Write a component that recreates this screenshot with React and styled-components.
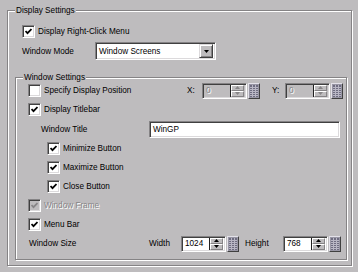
import styled, { createGlobalStyle } from 'styled-components';

const GlobalStyle = createGlobalStyle`
  html, body {
    margin: 0;
    padding: 0;
    background: #bebcbe;
  }
  body {
    font-family: "Liberation Sans", Arial, sans-serif;
    font-size: 8.2px;
    color: #000;
  }
`

const Page = styled.div`
  width: 358px;
  height: 272px;
  padding-top: 10px;
  box-sizing: border-box;
  overflow: hidden;
`

const Group = styled.div`
  position: relative;
  box-sizing: border-box;
  width: ${p => p.$w}px;
  height: ${p => p.$h}px;
  margin-left: ${p => p.$left || 0}px;
  margin-top: ${p => p.$top || 0}px;
  padding: ${p => p.$pad};
  border: 1px solid #858385;
  box-shadow: 1px 1px 0 #fff, inset 1px 1px 0 #fff;
`

const Legend = styled.span`
  position: absolute;
  top: -6px;
  left: 7px;
  padding: 0 1px;
  line-height: 11px;
  background: #bebcbe;
`

const Row = styled.div`
  display: flex;
  align-items: center;
  height: ${p => p.$h || 19}px;
  padding-left: ${p => p.$indent || 0}px;
`

const Label = styled.span`
  display: inline-block;
  width: ${p => (p.$w ? `${p.$w}px` : 'auto')};
  margin-left: ${p => p.$ml || 0}px;
  white-space: nowrap;
  color: ${p => (p.$disabled ? '#878587' : '#000')};
  text-shadow: ${p => (p.$disabled ? '1px 1px 0 #fff' : 'none')};
`

const CheckWrap = styled.label`
  display: flex;
  align-items: center;
  width: ${p => (p.$w ? `${p.$w}px` : 'auto')};
`

const Box = styled.span`
  box-sizing: border-box;
  display: inline-flex;
  align-items: center;
  justify-content: center;
  width: 13px;
  height: 13px;
  margin-right: 3px;
  background: ${p => (p.$disabled ? '#bebcbe' : '#fff')};
  border-top: 1px solid #858385;
  border-left: 1px solid #858385;
  border-bottom: 1px solid #fff;
  border-right: 1px solid #fff;
  box-shadow: inset 1px 1px 0 #404040, inset -1px -1px 0 #dcdadc;
`

const Sunken = styled.div`
  box-sizing: border-box;
  display: flex;
  align-items: center;
  width: ${p => p.$w}px;
  height: ${p => p.$h || 17}px;
  background: ${p => (p.$disabled ? '#bebcbe' : '#fff')};
  border-top: 1px solid #858385;
  border-left: 1px solid #858385;
  border-bottom: 1px solid #fff;
  border-right: 1px solid #fff;
  box-shadow: inset 1px 1px 0 #404040, inset -1px -1px 0 #dcdadc;
  padding: 2px;
`

const FieldText = styled.span`
  flex: 1;
  padding-left: 1px;
  color: ${p => (p.$disabled ? '#878587' : '#000')};
  text-shadow: ${p => (p.$disabled ? '1px 1px 0 #fff' : 'none')};
  white-space: nowrap;
`

const DropButton = styled.span`
  box-sizing: border-box;
  display: flex;
  align-items: center;
  justify-content: center;
  width: 14px;
  height: 14px;
  background: #bebcbe;
  border-top: 1px solid #dcdadc;
  border-left: 1px solid #dcdadc;
  border-bottom: 1px solid #404040;
  border-right: 1px solid #404040;
  box-shadow: inset 1px 1px 0 #fff, inset -1px -1px 0 #858385;
`

const SpinCol = styled.span`
  display: flex;
  flex-direction: column;
  width: 13px;
  height: 12px;
  border-left: 1px solid #202020;
`

const SpinBtn = styled.span`
  box-sizing: border-box;
  display: flex;
  align-items: center;
  justify-content: center;
  flex: 1;
  background: #bebcbe;
  border-top: 1px solid #fff;
  border-left: 1px solid #fff;
  border-bottom: 1px solid #858385;
  border-right: 1px solid #858385;
`

const Keypad = styled.span`
  box-sizing: border-box;
  display: flex;
  align-items: center;
  justify-content: center;
  width: 12px;
  height: 16px;
  margin-left: ${p => p.$ml || 1}px;
  background: #9896a4;
  border-top: 1px solid #e4e2ea;
  border-left: 1px solid #e4e2ea;
  border-bottom: 1px solid #404040;
  border-right: 1px solid #404040;
`

const Check = ({ checked, disabled, label, w }) => (
  <CheckWrap $w={w}>
    <Box $disabled={disabled}>
      {checked && (
        <svg width="7" height="7" viewBox="0 0 7 7">
          <path d="M0.5 3 L2.5 5.2 L6.5 1" fill="none" stroke={disabled ? '#878587' : '#000'} strokeWidth="1.8" />
        </svg>
      )}
    </Box>
    <Label $disabled={disabled}>{label}</Label>
  </CheckWrap>
)

const Arrow = ({ up, color }) => (
  <svg width="5" height="3" viewBox="0 0 5 3">
    <path d={up ? 'M2.5 0 L5 3 L0 3 Z' : 'M0 0 L5 0 L2.5 3 Z'} fill={color} />
  </svg>
)

const KeypadIcon = () => (
  <Keypad>
    <svg width="8" height="12" viewBox="0 0 8 12">
      <rect x="0" y="0" width="8" height="12" fill="#6e6c80" />
      {[2, 5].map(x => <rect key={x} x={x} y="0" width="1" height="12" fill="#b8b6c4" />)}
      {[2, 4, 6, 8, 10].map(y => <rect key={y} x="0" y={y} width="8" height="1" fill="#b8b6c4" />)}
    </svg>
  </Keypad>
)

const SpinField = ({ value, disabled, w }) => (
  <>
    <Sunken $w={w} $h={16} $disabled={disabled}>
      <FieldText $disabled={disabled}>{value}</FieldText>
      <SpinCol>
        <SpinBtn><Arrow up color={disabled ? '#878587' : '#000'} /></SpinBtn>
        <SpinBtn><Arrow color={disabled ? '#878587' : '#000'} /></SpinBtn>
      </SpinCol>
    </Sunken>
    <KeypadIcon />
  </>
)

const App = () => (
  <Page>
    <GlobalStyle />
    <Group $w={345} $h={256} $left={7} $pad="11px 0 0 7px">
      <Legend>Display Settings</Legend>
      <Row $indent={7}>
        <Check checked label="Display Right-Click Menu" />
      </Row>
      <Row $indent={7} $h={20}>
        <Label $w={73}>Window Mode</Label>
        <Sunken $w={121} $h={18}>
          <FieldText>Window Screens</FieldText>
          <DropButton><Arrow color="#000" /></DropButton>
        </Sunken>
      </Row>

      <Group $w={332} $h={183} $top={16} $pad="3px 0 0 12px">
        <Legend>Window Settings</Legend>
        <Row>
          <Check label="Specify Display Position" w={159} />
          <Label $w={15}>X:</Label>
          <SpinField value="0" disabled w={45} />
          <Label $w={13} $ml={12}>Y:</Label>
          <SpinField value="0" disabled w={45} />
        </Row>
        <Row>
          <Check checked label="Display Titlebar" />
        </Row>
        <Row $h={20} $indent={13}>
          <Label $w={108}>Window Title</Label>
          <Sunken $w={191} $h={17}>
            <FieldText>WinGP</FieldText>
          </Sunken>
        </Row>
        <Row $indent={19}>
          <Check checked label="Minimize Button" />
        </Row>
        <Row $indent={19}>
          <Check checked label="Maximize Button" />
        </Row>
        <Row $indent={19}>
          <Check checked label="Close Button" />
        </Row>
        <Row>
          <Check checked disabled label="Window Frame" />
        </Row>
        <Row>
          <Check checked label="Menu Bar" />
        </Row>
        <Row $indent={1}>
          <Label $w={120}>Window Size</Label>
          <Label $w={32}>Width</Label>
          <SpinField value="1024" w={45} />
          <Label $w={38} $ml={6}>Height</Label>
          <SpinField value="768" w={45} />
        </Row>
      </Group>
    </Group>
  </Page>
)

export default App
